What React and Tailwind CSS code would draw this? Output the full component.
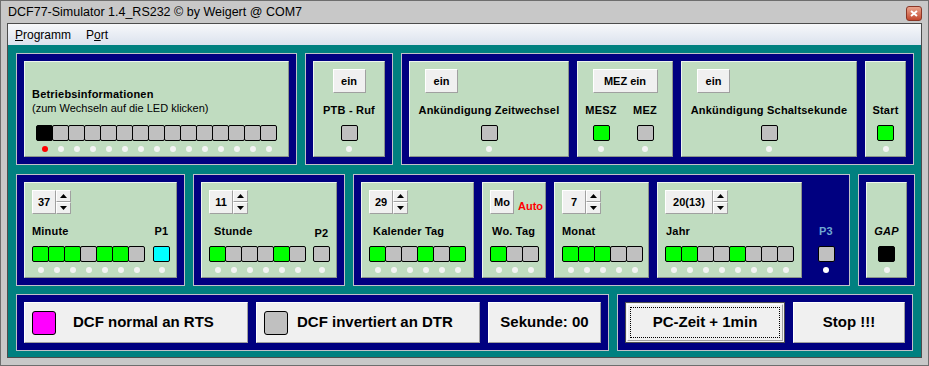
import React from 'react';

const COLORS = {
  g: 'bg-[#00ff00]',
  s: 'bg-[#c0c0c0]',
  k: 'bg-black',
  c: 'bg-[#00ffff]',
};

// one LED with its little indicator dot underneath
function LedCol({ color, dot = 'bg-[#f4f4f4]', first = true }) {
  return (
    <div className={`flex flex-col items-center w-[17px] ${first ? '' : '-ml-px'}`}>
      <div className={`w-[17px] h-[16px] border border-black rounded-[2px] ${COLORS[color]}`} />
      <div className={`mt-[5px] w-[6px] h-[6px] rounded-full ${dot}`} />
    </div>
  );
}

function LedRow({ pattern, dots = [] }) {
  return (
    <div className="flex">
      {pattern.split('').map((c, i) => (
        <LedCol key={i} color={c} first={i === 0} dot={dots[i]} />
      ))}
    </div>
  );
}

const bevel = 'border-t border-l border-t-white border-l-white border-r border-b border-r-[#a0a0a0] border-b-[#a0a0a0]';

function Btn({ children, w = 'w-[33px]' }) {
  return (
    <div className={`${w} h-[24px] bg-[#f0f0f0] ${bevel} flex items-center justify-center text-[11px] font-bold`}>
      {children}
    </div>
  );
}

function Arrow({ up }) {
  return (
    <div className={`w-[15px] h-[12px] bg-[#f0f0f0] ${bevel} flex items-center justify-center`}>
      <svg width="7" height="4" viewBox="0 0 7 4">
        {up ? <path d="M3.5 0 L7 4 L0 4 Z" fill="#000" /> : <path d="M0 0 L7 0 L3.5 4 Z" fill="#000" />}
      </svg>
    </div>
  );
}

function Spin({ value, w = 'w-[24px]' }) {
  return (
    <div className="flex h-[24px]">
      <div className={`${w} h-[24px] bg-[#f0f0f0] ${bevel} flex items-center justify-center text-[11px] font-bold`}>
        {value}
      </div>
      <div className="flex flex-col">
        <Arrow up />
        <Arrow />
      </div>
    </div>
  );
}

function Panel({ w, className = '', children }) {
  return (
    <div
      className={`${w} h-[96px] bg-[#c0dcc0] border-t border-l border-t-[#eef4ee] border-l-[#eef4ee] border-r border-b border-r-[#8c948c] border-b-[#8c948c] flex flex-col ${className}`}
    >
      {children}
    </div>
  );
}

function Group({ children, className = '' }) {
  return (
    <div className={`bg-[#000080] border border-[#c0c0c8] p-[7px] flex gap-[8px] ${className}`}>
      {children}
    </div>
  );
}

const label = 'h-[14px] leading-[14px] text-[11px] font-bold whitespace-nowrap tracking-[0.2px]';

function SinglePanel({ w, button, btnW, btnLeft, text, led }) {
  return (
    <Panel w={w} className="items-center pt-[7px]">
      {button ? (
        <div className={btnLeft ? 'self-start ml-[15px]' : ''}>
          <Btn w={btnW}>{button}</Btn>
        </div>
      ) : (
        <div className="h-[24px]" />
      )}
      <div className={`mt-[10px] ${label}`}>{text}</div>
      <div className="mt-[8px]">
        <LedCol color={led} />
      </div>
    </Panel>
  );
}

function BigBtn({ w, className = '', children }) {
  return (
    <div className={`${w} h-[41px] bg-[#f0f0f0] ${bevel} flex items-center text-[15px] font-bold whitespace-nowrap ${className}`}>
      {children}
    </div>
  );
}

export default function App() {
  return (
    <div className="w-[929px] h-[366px] bg-[#c8c8c8] border border-[#6e6e6e] flex flex-col font-['Liberation_Sans',Arial,sans-serif] text-black overflow-hidden">
      {/* title bar */}
      <div className="h-[22px] flex items-center justify-between pl-[7px] pr-[6px]">
        <span className="text-[12.5px] leading-none">DCF77-Simulator 1.4_RS232 © by Weigert @ COM7</span>
        <div className="w-[16px] h-[15px] mt-[2px] rounded-[3px] border border-[#8a3626] bg-gradient-to-b from-[#e9a38c] to-[#c2452b] flex items-center justify-center">
          <svg width="8" height="7" viewBox="0 0 8 7">
            <path d="M1 1 L7 6 M7 1 L1 6" stroke="#fff" strokeWidth="2" />
          </svg>
        </div>
      </div>

      {/* client */}
      <div className="mx-[6px] border border-[#4c4c4c] flex flex-col">
        <div className="h-[21px] bg-gradient-to-b from-[#f7f8fa] to-[#dbe2ee] flex items-center pt-[1px] text-[12px]">
          <span className="ml-[7px]"><u>P</u>rogramm</span>
          <span className="ml-[15px]">P<u>o</u>rt</span>
        </div>

        <div className="h-[312px] bg-[#008080] pl-[8px] pt-[8px] flex flex-col">
          {/* top row */}
          <div className="flex gap-[7px]">
            <Group>
              <Panel w="w-[265px]" className="pl-[7px] pt-[25px]">
                <div className={label}>Betriebsinformationen</div>
                <div className="h-[14px] leading-[14px] text-[11px] whitespace-nowrap">(zum Wechseln auf die LED klicken)</div>
                <div className="mt-[10px] ml-[4px]">
                  <LedRow pattern="kssssssssssssss" dots={['bg-[#ff0000]']} />
                </div>
              </Panel>
            </Group>
            <Group className="ml-[1px]">
              <SinglePanel w="w-[72px]" button="ein" text="PTB - Ruf" led="s" />
            </Group>
            <Group className="ml-[1px]">
              <SinglePanel w="w-[160px]" button="ein" btnLeft text="Ankündigung Zeitwechsel" led="s" />
              <Panel w="w-[96px]" className="pt-[7px]">
                <div className="self-center">
                  <Btn w="w-[65px]">MEZ ein</Btn>
                </div>
                <div className="flex pl-[6px] mt-[10px]">
                  <div className="w-[34px] flex flex-col items-center">
                    <div className={label}>MESZ</div>
                    <div className="mt-[8px]"><LedCol color="g" /></div>
                  </div>
                  <div className="w-[18px] ml-[18px] flex flex-col items-center">
                    <div className={label}>MEZ</div>
                    <div className="mt-[8px]"><LedCol color="s" /></div>
                  </div>
                </div>
              </Panel>
              <SinglePanel w="w-[176px]" button="ein" btnLeft text="Ankündigung Schaltsekunde" led="s" />
              <SinglePanel w="w-[41px]" text="Start" led="g" />
            </Group>
          </div>

          {/* middle row */}
          <div className="flex gap-[8px] mt-[9px]">
            <Group>
              <Panel w="w-[153px]" className="pl-[7px] pt-[7px]">
                <Spin value="37" />
                <div className="flex mt-[10px]">
                  <div className={`w-[113px] ${label}`}>Minute</div>
                  <div className={`w-[17px] ml-[8px] text-center ${label}`}>P1</div>
                </div>
                <div className="flex mt-[8px]">
                  <LedRow pattern="gggsggs" />
                  <div className="ml-[8px]"><LedCol color="c" /></div>
                </div>
              </Panel>
            </Group>
            <Group>
              <Panel w="w-[136px]" className="pl-[7px] pt-[7px]">
                <Spin value="11" />
                <div className="flex mt-[10px]">
                  <div className={`w-[92px] ml-[5px] ${label}`}>Stunde</div>
                  <div className={`w-[17px] ml-[7px] mt-[2px] text-center ${label}`}>P2</div>
                </div>
                <div className="flex mt-[6px]">
                  <LedRow pattern="gsssgs" />
                  <div className="ml-[7px]"><LedCol color="s" /></div>
                </div>
              </Panel>
            </Group>
            <Group className="pr-[7px]">
              <Panel w="w-[113px]" className="pl-[7px] pt-[7px]">
                <Spin value="29" />
                <div className={`mt-[10px] ml-[4px] ${label}`}>Kalender Tag</div>
                <div className="mt-[8px]"><LedRow pattern="gssgsg" /></div>
              </Panel>
              <Panel w="w-[64px]" className="pl-[7px] pt-[7px]">
                <div className="flex items-end">
                  <div className={`w-[24px] h-[24px] bg-[#f0f0f0] ${bevel} flex items-center justify-center text-[11px] font-bold`}>Mo</div>
                  <div className="ml-[4px] mb-[1px] text-[11px] leading-[14px] font-bold text-[#ff0000]">Auto</div>
                </div>
                <div className={`mt-[10px] ml-[2px] ${label}`}>Wo. Tag</div>
                <div className="mt-[8px]"><LedRow pattern="gss" /></div>
              </Panel>
              <Panel w="w-[95px]" className="pl-[7px] pt-[7px]">
                <Spin value="7" />
                <div className={`mt-[10px] ${label}`}>Monat</div>
                <div className="mt-[8px]"><LedRow pattern="gggss" /></div>
              </Panel>
              <Panel w="w-[145px]" className="pl-[7px] pt-[7px]">
                <Spin value="20(13)" w="w-[48px]" />
                <div className={`mt-[10px] ml-[1px] ${label}`}>Jahr</div>
                <div className="mt-[8px]"><LedRow pattern="ggssgsss" /></div>
              </Panel>
              <div className="w-[32px] flex flex-col items-center pt-[42px]">
                <div className={`${label} text-[#6ea8d2]`}>P3</div>
                <div className="mt-[8px]"><LedCol color="s" dot="bg-white" /></div>
              </div>
            </Group>
            <Group>
              <Panel w="w-[41px]" className="items-center pt-[7px]">
                <div className="h-[24px]" />
                <div className={`mt-[10px] italic ${label}`}>GAP</div>
                <div className="mt-[8px]"><LedCol color="k" /></div>
              </Panel>
            </Group>
          </div>

          {/* bottom row */}
          <div className="flex gap-[8px] mt-[8px]">
            <Group>
              <BigBtn w="w-[224px]" className="pl-[7px]">
                <div className="w-[24px] h-[24px] rounded-[3px] border border-black bg-[#ff00ff]" />
                <span className="ml-[17px]">DCF normal an RTS</span>
              </BigBtn>
              <BigBtn w="w-[224px]" className="pl-[7px]">
                <div className="w-[24px] h-[24px] rounded-[3px] border border-black bg-[#c0c0c0]" />
                <span className="ml-[9px]">DCF invertiert an DTR</span>
              </BigBtn>
              <BigBtn w="w-[113px]" className="justify-center">Sekunde: 00</BigBtn>
            </Group>
            <Group>
              <div className="w-[160px] h-[41px] border border-[#505050] bg-[#f0f0f0] p-[1px]">
                <div className={`w-full h-full ${bevel} p-[2px]`}>
                  <div className="w-full h-full border border-dotted border-black flex items-center justify-center text-[15px] font-bold whitespace-nowrap">
                    PC-Zeit + 1min
                  </div>
                </div>
              </div>
              <BigBtn w="w-[112px]" className="justify-center">Stop !!!</BigBtn>
            </Group>
          </div>
        </div>
      </div>
    </div>
  );
}
